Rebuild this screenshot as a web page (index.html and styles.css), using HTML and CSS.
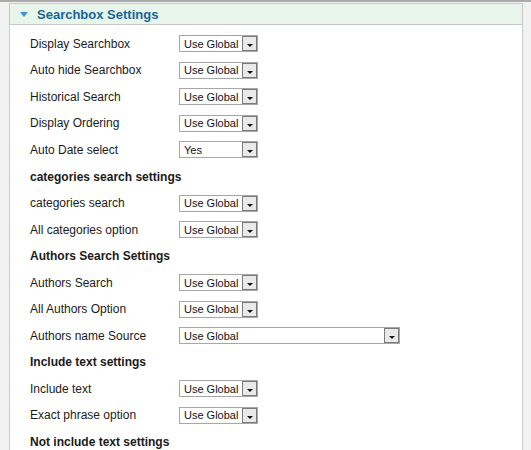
FILE: index.html
```html
<!DOCTYPE html>
<html>
<head>
<meta charset="utf-8">
<link rel="stylesheet" href="styles.css">
</head>
<body>
<div class="page">
  <div class="panel">
    <div class="panel-head">
      <span class="toggle"></span>
      <span class="panel-title">Searchbox Settings</span>
    </div>
    <div class="panel-body">
      <div class="row"><span class="label">Display Searchbox</span><div class="sel"><span class="val">Use Global</span><span class="btn"></span></div></div>
      <div class="row"><span class="label">Auto hide Searchbox</span><div class="sel"><span class="val">Use Global</span><span class="btn"></span></div></div>
      <div class="row"><span class="label">Historical Search</span><div class="sel"><span class="val">Use Global</span><span class="btn"></span></div></div>
      <div class="row"><span class="label">Display Ordering</span><div class="sel"><span class="val">Use Global</span><span class="btn"></span></div></div>
      <div class="row"><span class="label">Auto Date select</span><div class="sel"><span class="val">Yes</span><span class="btn"></span></div></div>
      <div class="heading">categories search settings</div>
      <div class="row"><span class="label">categories search</span><div class="sel"><span class="val">Use Global</span><span class="btn"></span></div></div>
      <div class="row"><span class="label">All categories option</span><div class="sel"><span class="val">Use Global</span><span class="btn"></span></div></div>
      <div class="heading">Authors Search Settings</div>
      <div class="row"><span class="label">Authors Search</span><div class="sel"><span class="val">Use Global</span><span class="btn"></span></div></div>
      <div class="row"><span class="label">All Authors Option</span><div class="sel"><span class="val">Use Global</span><span class="btn"></span></div></div>
      <div class="row"><span class="label">Authors name Source</span><div class="sel sel-wide"><span class="val">Use Global</span><span class="btn"></span></div></div>
      <div class="heading">Include text settings</div>
      <div class="row"><span class="label">Include text</span><div class="sel"><span class="val">Use Global</span><span class="btn"></span></div></div>
      <div class="row"><span class="label">Exact phrase option</span><div class="sel"><span class="val">Use Global</span><span class="btn"></span></div></div>
      <div class="heading">Not include text settings</div>
    </div>
  </div>
</div>
</body>
</html>
```
FILE: styles.css
```css
html, body {
  margin: 0;
  padding: 0;
  background: #f2f2f2;
  font-family: "Liberation Sans", Arial, sans-serif;
}
.page {
  border-top: 2px solid #ababab;
  padding-top: 1px;
  height: 447px;
  overflow: hidden;
}
.panel {
  margin-left: 9px;
  width: 512px;
  border: 1px solid #c9c9c9;
  border-bottom: none;
  background: #fff;
  height: 460px;
}
.panel-head {
  height: 20px;
  background: #e8f5ea;
  border-bottom: 1px solid #c9c9c9;
  display: flex;
  align-items: center;
  padding-left: 10px;
}
.toggle {
  width: 0;
  height: 0;
  border-left: 4px solid transparent;
  border-right: 4px solid transparent;
  border-top: 5px solid #3a97d4;
  margin-right: 9px;
  margin-top: 1px;
}
.panel-title {
  font-size: 13px;
  font-weight: bold;
  color: #17649a;
}
.panel-body {
  padding: 5.5px 0 0 20px;
}
.row, .heading {
  height: 26.55px;
  display: flex;
  align-items: center;
  font-size: 12px;
  color: #1a1a1a;
}
.heading {
  font-weight: bold;
}
.label {
  width: 149px;
  flex: none;
}
.sel {
  box-sizing: border-box;
  width: 79px;
  height: 17px;
  border: 1px solid #a7a7a7;
  background: #fff;
  display: flex;
  align-items: center;
}
.sel-wide {
  width: 221px;
}
.val {
  flex: 1;
  padding-left: 4px;
  font-size: 11px;
  color: #111;
}
.btn {
  box-sizing: border-box;
  width: 15px;
  height: 15px;
  border: 1px solid #7a7a7a;
  background: #e9e9e9;
  position: relative;
}
.btn::after {
  content: "";
  position: absolute;
  left: 4px;
  top: 7px;
  width: 0;
  height: 0;
  border-left: 3px solid transparent;
  border-right: 3px solid transparent;
  border-top: 3px solid #111;
}
```
